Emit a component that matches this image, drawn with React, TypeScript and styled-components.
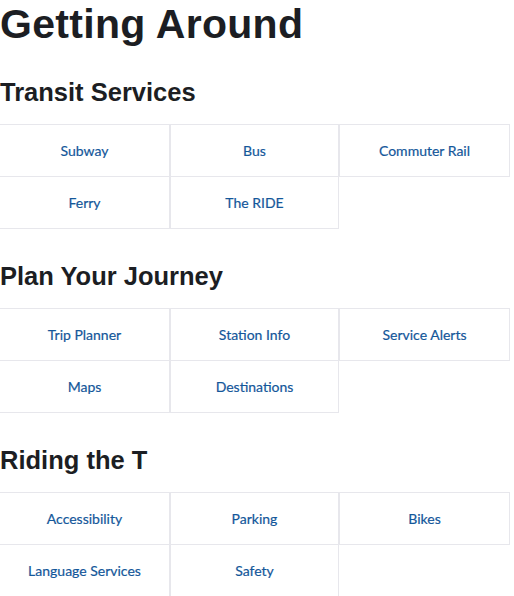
import React from "react";
import styled, { createGlobalStyle } from "styled-components";

const GlobalStyle = createGlobalStyle`
  body {
    margin: 0;
    background: #fff;
    font-family: "Liberation Sans", Arial, sans-serif;
  }
`;

const Page = styled.div`
  width: 514px;
  overflow: hidden;
`;

const Title = styled.h1`
  margin: 0;
  font-size: 41px;
  line-height: 48px;
  font-weight: 700;
  letter-spacing: 0.3px;
  color: #1c1e23;
`;

const Section = styled.section`
  margin-top: 28px;
  & + & {
    margin-top: 32px;
  }
`;

const SectionTitle = styled.h2`
  margin: 0 0 16px;
  font-size: 25.5px;
  line-height: 32px;
  font-weight: 700;
  color: #1c1e23;
`;

const LinkGrid = styled.div`
  display: grid;
  grid-template-columns: 171px 169px 171px;
  margin-left: -1px;
`;

const LinkCell = styled.a`
  display: flex;
  align-items: center;
  justify-content: center;
  height: 53px;
  margin-bottom: -1px;
  box-sizing: border-box;
  border: 1px solid #e7e7ec;
  font-family: Lato, "Open Sans", sans-serif;
  font-size: 14px;
  color: #14579a;
  text-decoration: none;
  -webkit-text-stroke: 0.2px #14579a;
`;

const sections = [
  {
    title: "Transit Services",
    links: ["Subway", "Bus", "Commuter Rail", "Ferry", "The RIDE"],
  },
  {
    title: "Plan Your Journey",
    links: ["Trip Planner", "Station Info", "Service Alerts", "Maps", "Destinations"],
  },
  {
    title: "Riding the T",
    links: ["Accessibility", "Parking", "Bikes", "Language Services", "Safety"],
  },
];

const App: React.FC = () => {
  return (
    <Page>
      <GlobalStyle />
      <Title>Getting Around</Title>
      {sections.map((section) => (
        <Section key={section.title}>
          <SectionTitle>{section.title}</SectionTitle>
          <LinkGrid>
            {section.links.map((link) => (
              <LinkCell key={link} href="#">
                {link}
              </LinkCell>
            ))}
          </LinkGrid>
        </Section>
      ))}
    </Page>
  );
};

export default App;
